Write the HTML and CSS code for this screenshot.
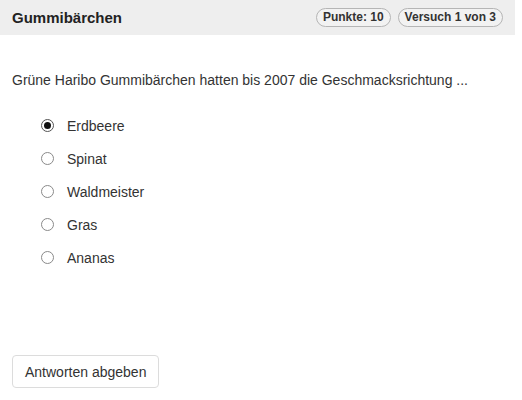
FILE: index.html
```html
<!DOCTYPE html>
<html lang="de">
<head>
<meta charset="utf-8">
<link rel="stylesheet" href="styles.css">
</head>
<body>
<div class="quiz">
  <div class="header">
    <div class="title">Gummibärchen</div>
    <div class="badges">
      <span class="badge">Punkte: 10</span>
      <span class="badge">Versuch 1 von 3</span>
    </div>
  </div>
  <div class="content">
    <p class="question">Grüne Haribo Gummibärchen hatten bis 2007 die Geschmacksrichtung ...</p>
    <ul class="options">
      <li class="option"><span class="radio checked"></span><span class="label">Erdbeere</span></li>
      <li class="option"><span class="radio"></span><span class="label">Spinat</span></li>
      <li class="option"><span class="radio"></span><span class="label">Waldmeister</span></li>
      <li class="option"><span class="radio"></span><span class="label">Gras</span></li>
      <li class="option"><span class="radio"></span><span class="label">Ananas</span></li>
    </ul>
    <button class="submit">Antworten abgeben</button>
  </div>
</div>
</body>
</html>
```
FILE: styles.css
```css
html, body {
  margin: 0;
  padding: 0;
  background: #fff;
}
body {
  font-family: "Liberation Sans", Arial, sans-serif;
  color: #333;
}
.quiz {
  width: 515px;
}
.header {
  height: 35px;
  background: #eeeeee;
  display: flex;
  align-items: center;
  justify-content: space-between;
  padding: 0 12px;
  box-sizing: border-box;
}
.title {
  font-size: 15px;
  font-weight: bold;
  color: #222;
}
.badges {
  display: flex;
  gap: 7px;
}
.badge {
  font-size: 12px;
  font-weight: bold;
  color: #333;
  border: 1px solid #b5b5b5;
  border-radius: 10px;
  height: 17px;
  line-height: 17px;
  padding: 0 6px;
  background: #f2f2f2;
}
.content {
  padding: 0 12px;
}
.question {
  margin: 0;
  padding-top: 37px;
  font-size: 14px;
  line-height: 16px;
  color: #333;
}
.options {
  list-style: none;
  margin: 0;
  padding: 21px 0 0 29px;
}
.option {
  display: flex;
  align-items: center;
  height: 33px;
  font-size: 14px;
  color: #333;
}
.radio {
  width: 11px;
  height: 11px;
  border: 1px solid #8a8a8a;
  border-radius: 50%;
  background: #fff;
  display: flex;
  align-items: center;
  justify-content: center;
  margin-right: 13px;
  flex: none;
}
.radio.checked {
  border-color: #555;
}
.radio.checked::after {
  content: "";
  width: 7px;
  height: 7px;
  border-radius: 50%;
  background: #111;
}
.submit {
  margin-top: 81px;
  height: 33px;
  padding: 0 12px;
  font-family: "Liberation Sans", Arial, sans-serif;
  font-size: 14px;
  color: #333;
  background: #fff;
  border: 1px solid #dcdcdc;
  border-radius: 4px;
}
```
